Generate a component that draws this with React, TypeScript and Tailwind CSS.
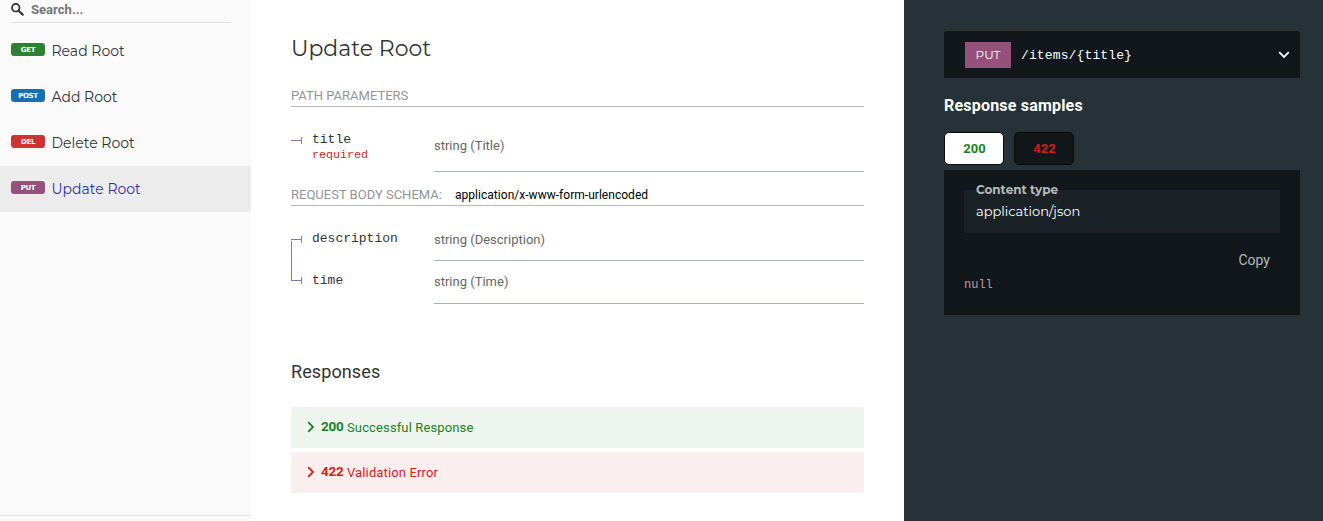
import React from "react";

const navItems = [
  { verb: "GET", label: "Read Root", color: "bg-[#2f8132]", active: false },
  { verb: "POST", label: "Add Root", color: "bg-[#186faf]", active: false },
  { verb: "DEL", label: "Delete Root", color: "bg-[#cc3333]", active: false },
  { verb: "PUT", label: "Update Root", color: "bg-[#95507c]", active: true },
];

const mono = "font-['Courier_New','Liberation_Mono',monospace]";
const heading = "font-[Montserrat,Inter,sans-serif]";

function Sidebar() {
  return (
    <aside className="flex h-full w-[251px] shrink-0 flex-col bg-[#fafafa]">
      <div className="ml-[11px] flex h-[23px] w-[220px] items-start border-b border-[#e1e1e1]">
        <svg className="mt-[3px] h-[13px] w-[13px] shrink-0" viewBox="0 0 1000 1000" fill="#333333">
          <path d="M968.2,849.4L667.3,549c83.9-136.5,66.7-317.4-51.7-435.6C477.1-25,252.5-25,113.9,113.4c-138.5,138.3-138.5,362.6,0,501C219.2,730.1,413.2,743,547.6,666.5l301.9,301.4c43.6,43.6,76.9,14.9,104.2-12.4C981,928.3,1011.8,893,968.2,849.4z M524.5,522c-88.9,88.7-233,88.7-321.8,0c-88.9-88.7-88.9-232.6,0-321.3c88.9-88.7,233-88.7,321.8,0C613.4,289.4,613.4,433.3,524.5,522z" />
        </svg>
        <span className="ml-[7px] text-[13px] leading-[20px] font-bold tracking-[0.04px] text-[#757575]">Search...</span>
      </div>
      <nav className="mt-[5px] flex flex-col">
        {navItems.map((item) => (
          <div
            key={item.verb}
            className={`flex h-[46px] pl-[11px] ${item.active ? "bg-[#ececec] text-[#32329f]" : "text-[#333333]"}`}
          >
            <span
              className={`mt-[15px] h-[13px] w-[34px] shrink-0 rounded-[3px] text-center font-[Verdana,'DejaVu_Sans',sans-serif] text-[7px] leading-[14px] font-bold tracking-[-0.3px] text-white ${item.color}`}
            >
              {item.verb}
            </span>
            <span className={`ml-[6.5px] ${heading} text-[14px] leading-[46px]`}>{item.label}</span>
          </div>
        ))}
      </nav>
      <div className="mt-auto h-[6px] border-t border-[#e1e1e1]" />
    </aside>
  );
}

function Chevron({ className }: { className: string }) {
  return (
    <svg className={className} viewBox="0 0 8 12" fill="none" stroke="currentColor" strokeWidth="1.8">
      <path d="M1.2 1.2 6 6 1.2 10.8" />
    </svg>
  );
}

function Tick() {
  return (
    <span className="flex h-[7px] w-[11px] shrink-0 items-center border-r border-[#7c7cbb]">
      <span className="h-px w-full bg-[#7c7cbb]" />
    </span>
  );
}

function Content() {
  return (
    <main className="flex h-full w-[653px] shrink-0 flex-col bg-white px-[40px]">
      <h2 className={`mt-[33px] h-[30px] ${heading} text-[22px] leading-[31px] text-[#333333]`}>Update Root</h2>
      <h5 className="mt-[23px] h-[21px] border-b border-[#b5b8ba] text-[13px] leading-[20px] text-[#929597]">PATH PARAMETERS</h5>
      <div className="mt-[27px] flex h-[38px]">
        <div className="flex w-[143px]">
          <div className="mt-[3px] flex h-[7px]">
            <Tick />
          </div>
          <div className={`ml-[10px] ${mono} text-[13px] leading-[15px] text-[#333333]`}>
            <div className="mt-[-2px]">title</div>
            <div className="mt-px text-[11.7px] text-[#d41f1c]">required</div>
          </div>
        </div>
        <div className="flex-1 border-b border-[#9fb4be] pt-[2px] text-[13px] leading-[20px] text-[#666666]">string (Title)</div>
      </div>
      <h5 className="mt-[13px] flex h-[21px] border-b border-[#b5b8ba] text-[13px] leading-[20px] text-[#929597]">
        <span className="w-[164px]">REQUEST BODY SCHEMA:</span>
        <span className="text-[12px] tracking-[0.03px] text-black">application/x-www-form-urlencoded</span>
      </h5>
      <div className="mt-[24px] flex">
        <div className="flex h-[54px] w-[143px]">
          <div className="flex flex-col pt-[6px]">
            <Tick />
            <span className="mt-[-2px] h-[42px] w-px bg-[#7c7cbb]" />
            <div className="mt-[-4px] flex">
              <Tick />
            </div>
          </div>
          <div className={`ml-[10px] pt-px ${mono} text-[13px] leading-[15px] text-[#333333]`}>
            <div className="h-[42px]">description</div>
            <div>time</div>
          </div>
        </div>
        <div className="flex-1 text-[13px] leading-[20px] text-[#666666]">
          <div className="h-[31px] border-b border-[#9fb4be]">string (Description)</div>
          <div className="h-[43px] border-b border-[#9fb4be] pt-[11px]">string (Time)</div>
        </div>
      </div>
      <h3 className="mt-[55px] h-[26px] text-[18px] leading-[26px] tracking-[0.1px] text-[#333333]">Responses</h3>
      <div className="mt-[22px] flex flex-col gap-[4px] text-[13px] leading-[41px]">
        <div className="flex h-[41px] items-center rounded-[2px] bg-[#edf5ee] pl-[16px] text-[#1d8127]">
          <Chevron className="mt-[-1px] h-[12px] w-[8px]" />
          <strong className="mt-[-2px] ml-[6px] w-[22px] text-[13.5px] leading-[39px] tracking-[-0.3px]">200</strong>
          <span className="ml-[4px] tracking-[0.13px]">Successful Response</span>
        </div>
        <div className="flex h-[41px] items-center rounded-[2px] bg-[#fbeeee] pl-[16px] text-[#d41f1c]">
          <Chevron className="mt-[-1px] h-[12px] w-[8px]" />
          <strong className="mt-[-2px] ml-[6px] w-[22px] text-[13.5px] leading-[39px] tracking-[-0.3px]">422</strong>
          <span className="ml-[4px] tracking-[0.13px]">Validation Error</span>
        </div>
      </div>
    </main>
  );
}

function Samples() {
  return (
    <section className="flex h-full flex-1 flex-col bg-[#263238] pr-[23px] pl-[40px]">
      <div className="mt-[31px] flex h-[47px] items-center rounded-t-[3px] bg-[#11171a] pr-[10px] pl-[21px]">
        <span className={`h-[26px] w-[46px] bg-[#95507c] text-center ${heading} text-[12px] leading-[26px] text-white`}>PUT</span>
        <span className={`mt-[2px] ml-[10px] ${mono} text-[13px] leading-[20px] tracking-[0.13px] text-white`}>/items/&#123;title&#125;</span>
        <svg className="ml-auto h-[8px] w-[12px]" viewBox="0 0 12 8" fill="none" stroke="white" strokeWidth="1.8">
          <path d="M1.2 1.2 6 6 10.8 1.2" />
        </svg>
      </div>
      <h3 className="mt-[17px] h-[20px] text-[16px] leading-[21px] font-bold tracking-[0.2px] text-white">Response samples</h3>
      <div className="mt-[17px] flex h-[33px] gap-[10px] text-center text-[13px] leading-[31px] font-bold">
        <div className="w-[60px] rounded-[5px] border border-[#07090b] bg-white pl-px text-[#1d8127]">200</div>
        <div className="w-[60px] rounded-[5px] border border-[#07090b] bg-[#11171a] pl-px text-[#d41f1c]">422</div>
      </div>
      <div className="mt-[5px] flex h-[145px] flex-col bg-[#11171a] px-[20px] pt-[20px]">
        <div className={`flex h-[43px] flex-col bg-[#1a2227] pl-[12px] ${heading}`}>
          <span className="mt-[-8px] h-[16px] text-[12px] leading-[16px] font-bold text-[#b8b9ba]">Content type</span>
          <span className="mt-[3px] text-[13px] leading-[20px] text-white">application/json</span>
        </div>
        <div className="mt-[17px] pr-[10px] text-right text-[14px] leading-[20px] text-[#b8b9ba]">Copy</div>
        <div className={`mt-[5px] ${mono} text-[12px] leading-[20px] text-[#cc929d]`}>null</div>
      </div>
    </section>
  );
}

export default function App() {
  return (
    <div className="flex h-[521px] w-[1323px] overflow-hidden bg-white font-[Roboto,sans-serif]">
      <Sidebar />
      <Content />
      <Samples />
    </div>
  );
}
